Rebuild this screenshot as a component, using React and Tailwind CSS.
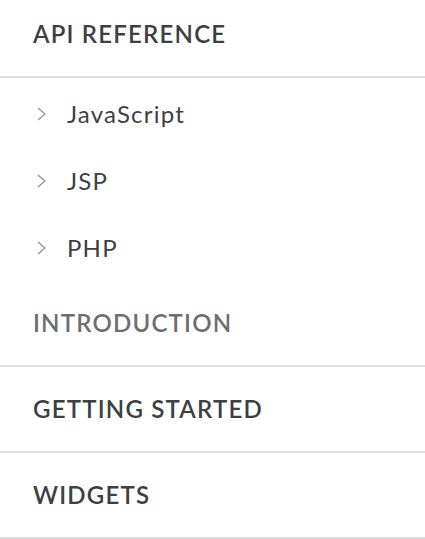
import React from 'react'

const Chevron = () => (
  <svg width="11" height="14" viewBox="0 0 11 14" fill="none" className="shrink-0">
    <path d="M2 1 L9 7 L2 13" stroke="#8a8c90" strokeWidth="1.1" />
  </svg>
)

export default function App() {
  const children = ['JavaScript', 'JSP', 'PHP']
  const sections = ['GETTING STARTED', 'WIDGETS']

  return (
    <div className="w-[425px] h-[539px] overflow-hidden bg-white font-['Lato','Liberation_Sans',sans-serif]">
      {/* API reference */}
      <div className="h-[78px] flex items-center pb-[8px] pl-[33px] border-b-2 border-[#dedede] text-[24px] font-semibold text-[#3c3f44] tracking-[1.2px]">
        API REFERENCE
      </div>
      <div className="pt-[2px]">
        {children.map((c) => (
          <div key={c} className="h-[67px] flex items-center pl-[36px] text-[24px] font-normal text-[#3c3f44] tracking-[1.2px]">
            <Chevron />
            <span className="ml-[20px]">{c}</span>
          </div>
        ))}
      </div>
      <div className="h-[86px] flex items-center pl-[33px] border-b-2 border-[#dedede] text-[24px] font-semibold text-[#6b6e73] tracking-[1.2px]">
        INTRODUCTION
      </div>
      {sections.map((s) => (
        <div key={s} className="h-[86px] flex items-center pl-[33px] border-b-2 border-[#dedede] text-[24px] font-semibold text-[#3c3f44] tracking-[1.2px]">
          {s}
        </div>
      ))}
    </div>
  )
}
